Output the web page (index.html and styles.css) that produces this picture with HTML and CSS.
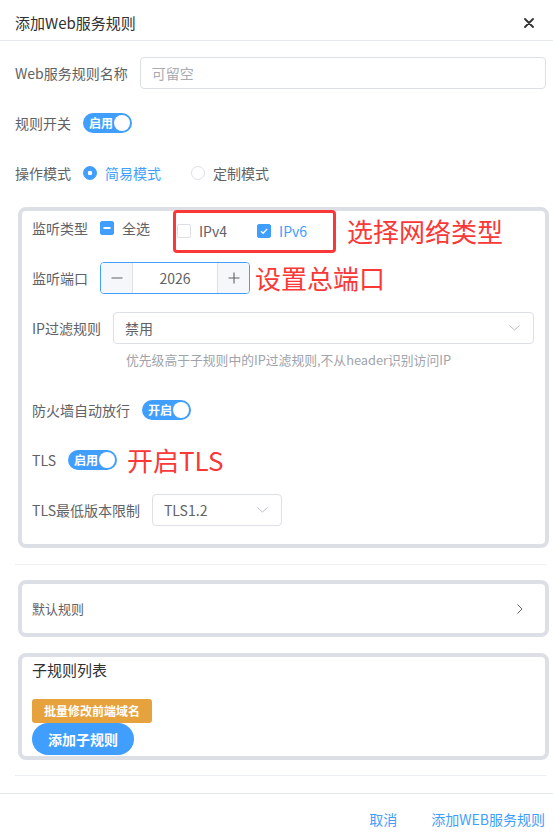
FILE: index.html
```html
<!DOCTYPE html>
<html lang="zh-CN">
<head>
<meta charset="utf-8">
<title>添加Web服务规则</title>
<link rel="stylesheet" href="styles.css">
</head>
<body>
<div class="dialog">
  <header class="dlg-header">
    <span class="title">添加Web服务规则</span>
    <span class="close"><svg width="10" height="10" viewBox="0 0 10 10"><path d="M1 1L9 9M9 1L1 9" stroke="#303133" stroke-width="1.8" stroke-linecap="round"/></svg></span>
  </header>

  <div class="dlg-body">
    <div class="row">
      <label class="lbl">Web服务规则名称</label>
      <div class="input"><span class="ph">可留空</span></div>
    </div>
    <div class="row">
      <label class="lbl">规则开关</label>
      <span class="switch"><span class="sw-text">启用</span><span class="knob"></span></span>
    </div>
    <div class="row">
      <label class="lbl">操作模式</label>
      <span class="radio checked"><i></i>简易模式</span>
      <span class="radio"><i></i>定制模式</span>
    </div>

    <section class="card card-main">
      <div class="row">
        <label class="lbl">监听类型</label>
        <span class="cb indeterminate"><i><svg width="8" height="2" viewBox="0 0 8 2"><rect x="0.5" y="0" width="7" height="2" fill="#fff"/></svg></i>全选</span>
        <span class="annot-box">
          <span class="cb"><i></i>IPv4</span>
          <span class="cb checked"><i><svg width="12" height="12" viewBox="0 0 12 12"><path d="M3 6.2L5.1 8.3L9.2 3.9" fill="none" stroke="#fff" stroke-width="1.3"/></svg></i>IPv6</span>
        </span>
        <span class="annot annot-shift">选择网络类型</span>
      </div>
      <div class="row">
        <label class="lbl">监听端口</label>
        <div class="num">
          <span class="nbtn minus"><svg width="12" height="12" viewBox="0 0 12 12"><path d="M0.5 6H11.5" stroke="#606266" stroke-width="1.1"/></svg></span>
          <span class="val">2026</span>
          <span class="nbtn plus"><svg width="12" height="12" viewBox="0 0 12 12"><path d="M0.5 6H11.5M6 0.5V11.5" stroke="#606266" stroke-width="1.1"/></svg></span>
        </div>
        <span class="annot annot-port">设置总端口</span>
      </div>
      <div class="row tight">
        <label class="lbl">IP过滤规则</label>
        <div class="select grow">
          <span>禁用</span>
          <svg width="11" height="6" viewBox="0 0 11 6"><path d="M0.5 0.5L5.5 5L10.5 0.5" fill="none" stroke="#b8bbc2" stroke-width="1"/></svg>
        </div>
      </div>
      <div class="hint">优先级高于子规则中的IP过滤规则,不从header识别访问IP</div>
      <div class="row">
        <label class="lbl">防火墙自动放行</label>
        <span class="switch"><span class="sw-text">开启</span><span class="knob"></span></span>
      </div>
      <div class="row">
        <label class="lbl">TLS</label>
        <span class="switch"><span class="sw-text">启用</span><span class="knob"></span></span>
        <span class="annot annot-tls">开启TLS</span>
      </div>
      <div class="row last">
        <label class="lbl">TLS最低版本限制</label>
        <div class="select sel-tls">
          <span>TLS1.2</span>
          <svg width="11" height="6" viewBox="0 0 11 6"><path d="M0.5 0.5L5.5 5L10.5 0.5" fill="none" stroke="#b8bbc2" stroke-width="1"/></svg>
        </div>
      </div>
    </section>

    <div class="divider first"></div>

    <section class="card card-default">
      <span>默认规则</span>
      <svg width="6" height="10" viewBox="0 0 6 10"><path d="M0.5 0.5L5 5L0.5 9.5" fill="none" stroke="#606266" stroke-width="1"/></svg>
    </section>

    <section class="card card-sub">
      <div class="sub-title">子规则列表</div>
      <span class="btn-orange">批量修改前端域名</span>
      <span class="btn-blue">添加子规则</span>
    </section>

    <div class="divider second"></div>
  </div>

  <footer class="dlg-footer">
    <span class="text-btn">取消</span>
    <span class="text-btn">添加WEB服务规则</span>
  </footer>
</div>
</body>
</html>
```

FILE: styles.css
```css
* { box-sizing: border-box; }

html, body {
  margin: 0;
  padding: 0;
  background: #fff;
}

body {
  font-family: "Noto Sans CJK SC", "Noto Sans", sans-serif;
  font-size: 14px;
  color: #606266;
  width: 553px;
}

.dialog {
  width: 553px;
}

.dlg-header {
  height: 41px;
  border-bottom: 1px solid #e4e7ed;
  display: flex;
  align-items: center;
  justify-content: space-between;
  padding: 5px 19px 0 15px;
}

.title {
  font-size: 15px;
  line-height: 20px;
  color: #303133;
}

.close {
  display: flex;
  width: 10px;
  height: 10px;
}

.dlg-body {
  padding: 16px 7px 0 15px;
}

.row {
  display: flex;
  align-items: center;
  height: 32px;
  margin-bottom: 18px;
}

.row.tight,
.row.last {
  margin-bottom: 0;
}

.lbl {
  padding-right: 12px;
  line-height: 32px;
  white-space: nowrap;
}

.input {
  flex: 1;
  height: 32px;
  border: 1px solid #dcdfe6;
  border-radius: 4px;
  padding: 0 11px;
  display: flex;
  align-items: center;
}

.ph {
  color: #a8abb2;
}

/* switch */
.switch {
  display: inline-flex;
  align-items: center;
  justify-content: space-between;
  width: 49px;
  height: 20px;
  border-radius: 10px;
  background: #409eff;
  padding: 0 2px 0 6px;
}

.sw-text {
  font-size: 12px;
  font-weight: 700;
  color: #fff;
  line-height: 20px;
}

.knob {
  width: 16px;
  height: 16px;
  border-radius: 50%;
  background: #fff;
}

/* radio */
.radio {
  display: inline-flex;
  align-items: center;
  margin-right: 30px;
  line-height: 32px;
}

.radio i {
  width: 14px;
  height: 14px;
  border: 1px solid #dcdfe6;
  border-radius: 50%;
  margin-right: 8px;
  background: #fff;
}

.radio.checked {
  color: #409eff;
}

.radio.checked i {
  border-color: #409eff;
  background: radial-gradient(circle, #fff 0 2px, #409eff 2.6px);
}

/* card */
.card {
  border: 4px solid #dcdfe6;
  border-radius: 8px;
  margin: 0 -3px 0 3px;
  background: #fff;
}

.card-main {
  padding: 1px 11px 18px 10px;
}

/* checkbox */
.cb {
  display: inline-flex;
  align-items: center;
  line-height: 32px;
}

.cb i {
  width: 14px;
  height: 14px;
  border: 1px solid #dcdfe6;
  border-radius: 2px;
  margin-right: 8px;
  background: #fff;
  display: inline-flex;
  align-items: center;
  justify-content: center;
}

.cb.indeterminate i,
.cb.checked i {
  border-color: #409eff;
  background: #409eff;
}

.cb.checked {
  color: #409eff;
}

.annot-box {
  display: flex;
  align-items: center;
  gap: 30px;
  height: 43px;
  margin-left: 23px;
  margin-top: 6px;
  padding: 0 26px 0 1px;
  border: 3px solid #fa3838;
  border-radius: 4px;
}

.annot {
  color: #fa3838;
  font-size: 26px;
  line-height: 32px;
  white-space: nowrap;
}

.annot-shift {
  margin-left: 11px;
  margin-top: 6px;
}

.annot-port {
  margin-left: 5px;
}

.annot-tls {
  margin-left: 10px;
}

/* number input */
.num {
  display: flex;
  width: 150px;
  height: 32px;
  border: 1px solid #409eff;
  border-radius: 4px;
  overflow: hidden;
}

.nbtn {
  width: 32px;
  background: #f5f7fa;
  display: flex;
  align-items: center;
  justify-content: center;
}

.nbtn.minus {
  border-right: 1px solid #dcdfe6;
}

.nbtn.plus {
  border-left: 1px solid #dcdfe6;
}

.val {
  flex: 1;
  text-align: center;
  line-height: 30px;
}

/* select */
.select {
  height: 32px;
  border: 1px solid #dcdfe6;
  border-radius: 4px;
  display: flex;
  align-items: center;
  justify-content: space-between;
  padding: 0 13px 0 11px;
}

.select.grow {
  flex: 1;
}

.sel-tls {
  width: 130px;
}

.hint {
  font-size: 12.8px;
  line-height: 32px;
  color: #a0a3a9;
  margin: 0 0 18px 94px;
}

/* divider */
.divider {
  height: 1px;
  background: #ebeef5;
}

.divider.first {
  margin-top: 16px;
}

.divider.second {
  margin-top: 15px;
  margin-bottom: 17px;
}

.card-default {
  margin-top: 15px;
  height: 57px;
  display: flex;
  align-items: center;
  justify-content: space-between;
  padding: 0 22px 0 10px;
  font-size: 13px;
}

.card-sub {
  margin-top: 16px;
  padding: 2px 10px 1px;
  display: flex;
  flex-direction: column;
  align-items: flex-start;
}

.sub-title {
  font-size: 15px;
  line-height: 22px;
  color: #303133;
}

.btn-orange {
  margin-top: 18px;
  height: 24px;
  line-height: 24px;
  padding: 0 12px;
  background: #e6a23c;
  color: #fff;
  font-size: 12px;
  font-weight: 700;
  border-radius: 3px;
}

.btn-blue {
  height: 32px;
  line-height: 32px;
  padding: 0 16px;
  background: #409eff;
  color: #fff;
  font-size: 14px;
  font-weight: 700;
  border-radius: 16px;
}

.dlg-footer {
  border-top: 1px solid #e4e7ed;
  display: flex;
  justify-content: flex-end;
  gap: 34px;
  padding: 9px 8px 0 0;
}

.text-btn {
  color: #409eff;
  line-height: 32px;
}
```
